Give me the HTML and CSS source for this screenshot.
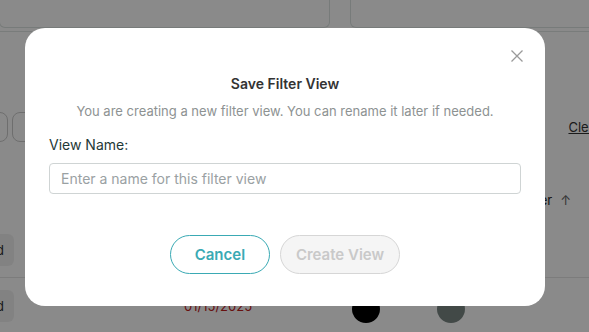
FILE: index.html
```html
<!DOCTYPE html>
<html lang="en">
<head>
  <meta charset="UTF-8" />
  <title>Save Filter View</title>
  <meta name="viewport" content="width=device-width, initial-scale=1.0" />
  <link rel="stylesheet" href="styles.css">
</head>
<body>
  <!-- Page behind the modal -->
  <div class="page">
    <div class="top-cards">
      <div class="card"></div>
      <div class="card"></div>
    </div>

    <div class="toolbar">
      <div class="pills">
        <span class="pill"></span>
        <span class="pill"></span>
      </div>
      <a class="clear-link">Clear</a>
    </div>

    <div class="sort-row">
      <span>Order<span class="arrow">&#8593;</span></span>
    </div>

    <div class="table-row first">
      <span class="chip">Saved</span>
    </div>
    <div class="table-row">
      <span class="chip">Saved</span>
      <span class="date">01/15/2025</span>
      <span class="avatar black"></span>
      <span class="avatar grey"></span>
    </div>
  </div>

  <!-- Save Filter Modal -->
  <div class="overlay">
    <div class="modal">
      <button class="close-btn" aria-label="Close">
        <svg width="12" height="12" viewBox="0 0 12 12">
          <path d="M0.5 0.5 L11.5 11.5 M11.5 0.5 L0.5 11.5" stroke="#9a9a9a" stroke-width="1.3" fill="none"/>
        </svg>
      </button>

      <h2>Save Filter View</h2>
      <p class="subtitle">You are creating a new filter view. You can rename it later if needed.</p>

      <label for="viewName">View Name:</label>
      <input type="text" id="viewName" placeholder="Enter a name for this filter view" />

      <div class="modal-actions">
        <button class="btn btn-outline">Cancel</button>
        <button class="btn btn-disabled" disabled>Create View</button>
      </div>
    </div>
  </div>
</body>
</html>
```
FILE: styles.css
```css
* {
  margin: 0;
  padding: 0;
  box-sizing: border-box;
  font-family: Inter, "Noto Sans", sans-serif;
}

html, body {
  height: 100%;
}

body {
  background-color: #fff;
  color: #333;
  overflow: hidden;
}

/* background page */
.page {
  height: 100%;
}

.top-cards {
  display: flex;
  gap: 20px;
  height: 32px;
  border-bottom: 1px solid #dfe6e4;
}

.card {
  height: 28px;
  flex: 0 0 331px;
  border: 1px solid #dde4e2;
  border-top: none;
  border-radius: 0 0 6px 6px;
  margin-left: -1px;
}

.card + .card {
  flex: 1;
  margin-left: 0;
  margin-right: -10px;
}

.toolbar {
  display: flex;
  justify-content: space-between;
  align-items: center;
  margin-top: 80px;
  height: 30px;
}

.pills {
  display: flex;
  gap: 4px;
  margin-left: -22px;
}

.pill {
  width: 30px;
  height: 30px;
  border: 1px solid #ccc;
  border-radius: 8px;
}

.clear-link {
  font-size: 13px;
  color: #333;
  text-decoration: underline;
  margin-right: -12px;
}

.sort-row {
  display: flex;
  justify-content: flex-end;
  margin-top: 50px;
  font-size: 13px;
  color: #222;
  margin-right: 18px;
}

.sort-row .arrow {
  color: #666;
  margin-left: 8px;
}

.table-row {
  display: flex;
  align-items: center;
  height: 56px;
  border-bottom: 1px solid #e6e6e6;
}

.table-row.first {
  margin-top: 14px;
}

.chip {
  background: #f1f1f1;
  padding: 8px 10px;
  border-radius: 6px;
  font-size: 13px;
  margin-left: -44px;
}

.date {
  color: #c0201c;
  font-size: 13px;
  margin-left: 170px;
}

.avatar {
  width: 28px;
  height: 28px;
  border-radius: 50%;
  margin-top: 6px;
}

.avatar.black {
  background: #000;
  margin-left: 100px;
}

.avatar.grey {
  background: #7a8784;
  margin-left: 57px;
}

/* modal */
.overlay {
  position: fixed;
  top: 0;
  left: 0;
  width: 100%;
  height: 100%;
  background-color: rgba(0, 0, 0, 0.46);
}

.modal {
  position: absolute;
  top: 28px;
  left: 25px;
  width: 520px;
  height: 278px;
  background: #fff;
  border-radius: 20px;
  padding: 46px 24px 32px;
  display: flex;
  flex-direction: column;
}

.close-btn {
  position: absolute;
  top: 22px;
  right: 22px;
  background: none;
  border: none;
  width: 12px;
  height: 12px;
  cursor: pointer;
  display: flex;
}

.modal h2 {
  font-size: 14px;
  font-weight: 600;
  line-height: 20px;
  text-align: center;
  color: #333;
}

.subtitle {
  font-size: 13px;
  line-height: 18px;
  text-align: center;
  color: #8d9292;
  margin-top: 8px;
}

.modal label {
  font-size: 14px;
  line-height: 20px;
  color: #1f3937;
  margin-top: 15px;
}

.modal input {
  margin-top: 8px;
  height: 31px;
  border: 1px solid #cfd4d4;
  border-radius: 4px;
  padding: 0 11px;
  font-size: 14px;
  color: #333;
}

.modal input::placeholder {
  color: #9aa1a3;
}

.modal-actions {
  display: flex;
  justify-content: center;
  gap: 10px;
  margin-top: 41px;
}

.btn {
  height: 39px;
  min-width: 100px;
  padding: 0 15px;
  border-radius: 20px;
  font-size: 15px;
  font-weight: 600;
  background: #fff;
  cursor: pointer;
}

.btn-outline {
  border: 1px solid #3aaab4;
  color: #3aaab4;
}

.btn-disabled {
  background: #f5f5f5;
  border: 1px solid #d6d6d6;
  color: #c9c9c9;
  cursor: default;
}
```
